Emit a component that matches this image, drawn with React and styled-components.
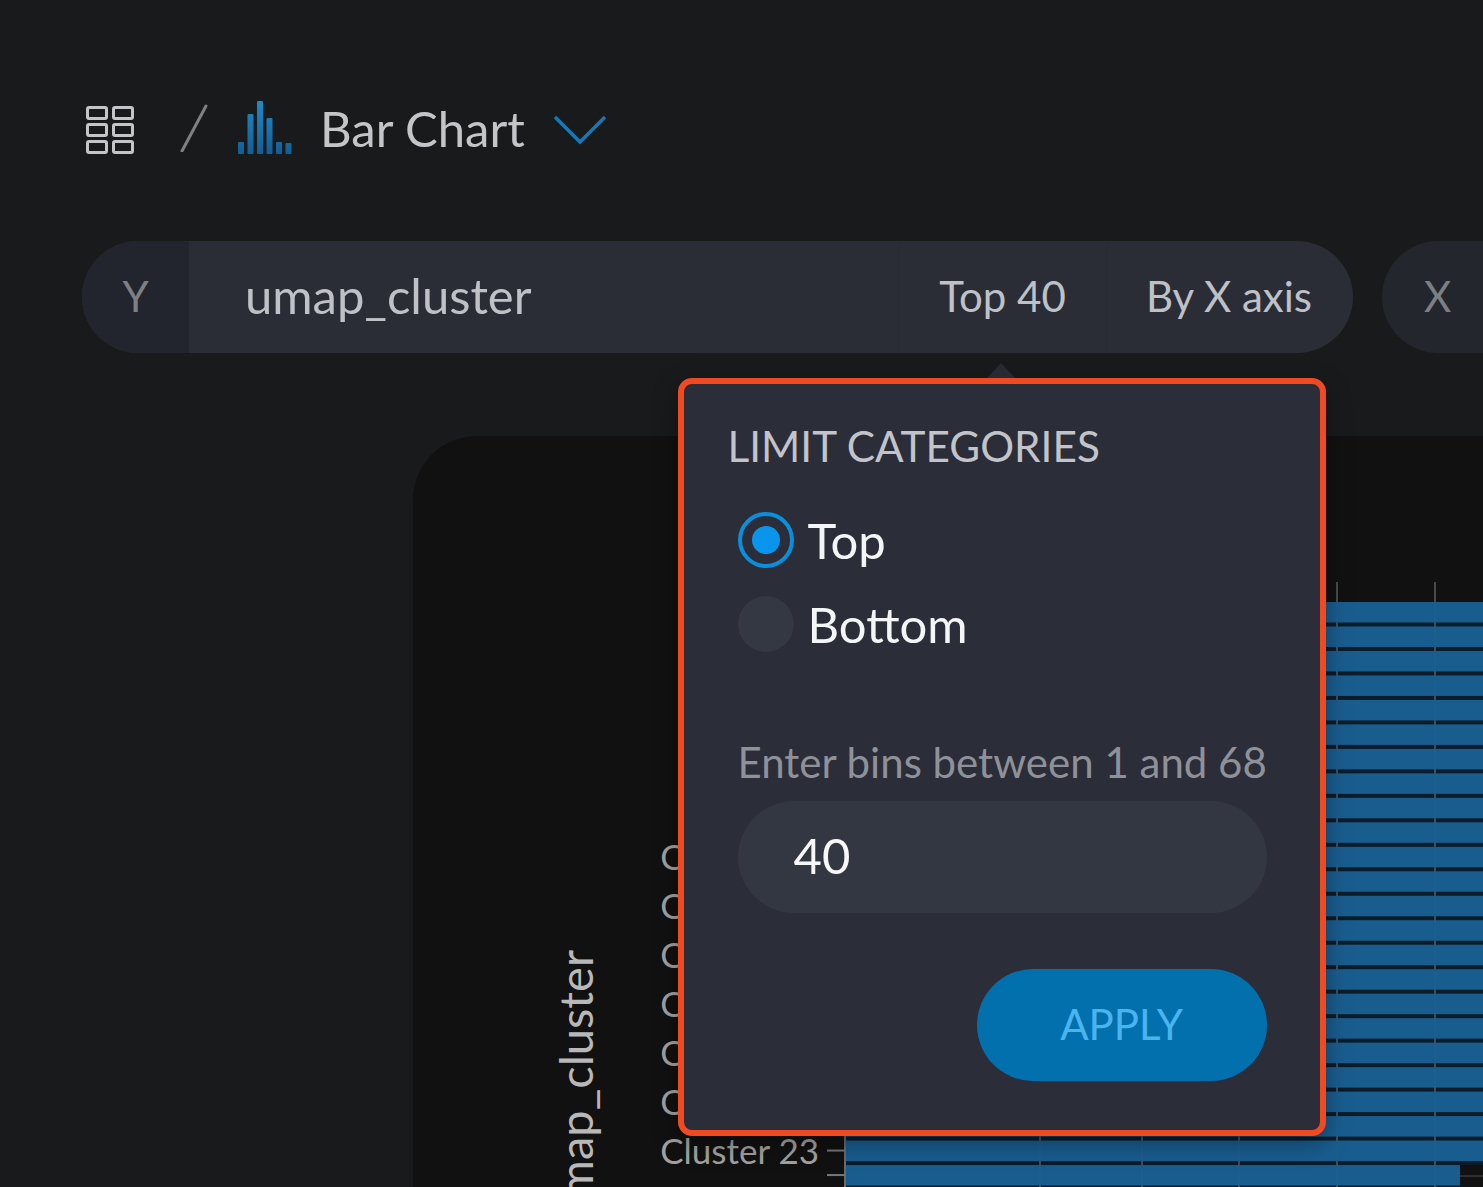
import React from "react";
import styled, { createGlobalStyle } from "styled-components";

const Global = createGlobalStyle`
  html, body { margin: 0; padding: 0; background: #191a1c; }
  body { font-family: Lato, "Open Sans", sans-serif; }
`;

const Page = styled.div`
  width: 1483px;
  height: 1187px;
  overflow: hidden;
  box-sizing: border-box;
  padding: 98px 0 0 82px;
  background: #191a1c;
`;

const Header = styled.header`
  display: flex;
  align-items: center;
  height: 60px;
  padding-left: 4px;
`;

const Title = styled.h1`
  margin: 0 28px 0 28px;
  font-size: 49px;
  line-height: 60px;
  font-weight: 400;
  color: #c4c5c9;
`;

const Slash = styled.svg`
  margin: 0 30px 0 46px;
  flex: none;
`;

const GridSvg = styled.svg`
  flex: none;
  margin-top: 3px;
`;

const BarsSvg = styled.svg`
  flex: none;
  margin-top: -3px;
`;

const ChevronSvg = styled.svg`
  flex: none;
  margin-top: 3px;
`;

const PillRow = styled.div`
  display: flex;
  gap: 29px;
  margin-top: 83px;
  width: 1700px;
`;

const FieldPill = styled.div`
  display: flex;
  width: 1271px;
  height: 112px;
  border-radius: 56px;
  background: #2a2d36;
  color: #bfc1c7;
`;

const AxisCell = styled.div`
  flex: none;
  box-sizing: border-box;
  width: 107px;
  height: 100%;
  padding-bottom: 2px;
  display: flex;
  align-items: center;
  justify-content: center;
  font-size: 42px;
  font-weight: 400;
  color: #7d7f85;
  background: #22252d;
  border-radius: 56px 0 0 56px;
`;

const NameCell = styled.div`
  flex: none;
  box-sizing: border-box;
  width: 710px;
  display: flex;
  align-items: center;
  padding: 0 0 4px 56px;
  font-size: 49px;
  font-weight: 400;
  border-right: 1px solid #282b33;
`;

const OptionCell = styled.div`
  flex: none;
  position: relative;
  box-sizing: border-box;
  width: ${(p) => p.$w}px;
  padding: 0 ${(p) => (p.$last ? 2 : 0)}px 2px 0;
  display: flex;
  align-items: center;
  justify-content: center;
  font-size: 42px;
  font-weight: 400;
  border-right: ${(p) => (p.$last ? "none" : "1px solid #282b33")};
`;

const XPill = styled.div`
  flex: none;
  box-sizing: border-box;
  width: 300px;
  height: 112px;
  padding: 0 0 2px 42px;
  display: flex;
  align-items: center;
  border-radius: 56px 0 0 56px;
  background: #23262d;
  font-size: 42px;
  font-weight: 400;
  color: #7d7f85;
`;

const ChartPanel = styled.section`
  margin: 83px 0 0 331px;
  width: 1070px;
  height: 751px;
  background: #111112;
  border-radius: 64px 0 0 0;
  overflow: hidden;
`;

const ChartSvg = styled.svg`
  display: block;
`;

const Popover = styled.div`
  position: absolute;
  z-index: 2;
  top: calc(100% + 25px);
  left: calc(50% - 325px);
  box-sizing: border-box;
  width: 648px;
  height: 758px;
  padding: 36px 53px 0 44px;
  background: #2b2d38;
  border: 6px solid #f04a23;
  border-radius: 14px;
  box-shadow: 0 8px 24px rgba(0, 0, 0, 0.35);

  &::before {
    content: "";
    position: absolute;
    top: -21px;
    left: 303px;
    border-left: 14px solid transparent;
    border-right: 14px solid transparent;
    border-bottom: 15px solid #272933;
  }
`;

const PopTitle = styled.div`
  font-size: 42.3px;
  line-height: 52px;
  font-weight: 400;
  color: #c2c4ca;
  white-space: nowrap;
`;

const RadioGroup = styled.div`
  display: flex;
  flex-direction: column;
  gap: 28px;
  margin: 40px 0 0 10px;
`;

const RadioRow = styled.label`
  display: flex;
  align-items: center;
  gap: 14px;
  height: 56px;
  font-size: 49px;
  font-weight: 400;
  color: #f4f5f6;
`;

const RadioDot = styled.span`
  flex: none;
  box-sizing: border-box;
  width: 56px;
  height: 56px;
  border-radius: 50%;
  display: flex;
  align-items: center;
  justify-content: center;
  background: ${(p) => (p.$on ? "transparent" : "#343842")};
  border: ${(p) => (p.$on ? "4px solid #0a8fdc" : "none")};

  &::after {
    content: "";
    display: ${(p) => (p.$on ? "block" : "none")};
    width: 28px;
    height: 28px;
    border-radius: 50%;
    background: #0a95ec;
  }
`;

const FieldLabel = styled.div`
  margin: 85px 0 0 10px;
  font-size: 42px;
  line-height: 50px;
  font-weight: 400;
  color: #8f9198;
  white-space: nowrap;
`;

const NumberBox = styled.div`
  box-sizing: border-box;
  margin: 14px 0 0 10px;
  height: 112px;
  padding: 0 0 4px 56px;
  display: flex;
  align-items: center;
  border-radius: 56px;
  background: #333742;
  font-size: 49px;
  color: #f7f7f8;
`;

const Footer = styled.div`
  display: flex;
  justify-content: flex-end;
  margin-top: 56px;
`;

const ApplyButton = styled.button`
  width: 290px;
  height: 112px;
  padding: 0 0 2px;
  border: none;
  border-radius: 56px;
  background: #0370ae;
  color: #4ab4ee;
  font-family: inherit;
  font-size: 42px;
  font-weight: 400;
`;

const AxisLabel = styled.text`
  font-family: Lato, sans-serif;
  font-size: 35px;
  fill: #a2a2a2;
`;

const AxisTitle = styled.text`
  font-family: Lato, sans-serif;
  font-size: 47px;
  font-weight: 400;
  fill: #b8b8b8;
`;

const ROWS = Array.from({ length: 24 }, (_, i) => i);
const TICKS = [1040, 1142, 1239, 1337, 1435];
const rowTop = (i) => 602 + i * 24.48;

function Chart() {
  return (
    <ChartSvg width="1070" height="751" viewBox="413 436 1070 751">
      <rect x="845" y="602" width="638" height="585" fill="#0b1c2a" />
      {TICKS.map((x) => (
        <line key={x} x1={x} y1="582" x2={x} y2="1187" stroke="#4a4a4a" strokeWidth="2" />
      ))}
      <rect x="1460" y={rowTop(23)} width="23" height="24" fill="#111112" />
      <line x1="1460" y1={rowTop(23) + 11} x2="1483" y2={rowTop(23) + 11} stroke="#3a3a3a" strokeWidth="1.5" />
      {ROWS.map((i) => (
        <rect
          key={i}
          x="845"
          y={rowTop(i)}
          width={i === 23 ? 615 : 638}
          height="20.5"
          fill="#1a6093"
          fillOpacity="0.97"
        />
      ))}
      <line x1="845" y1="602" x2="845" y2="1187" stroke="#6a6a6a" strokeWidth="2" />
      {ROWS.map((i) => (
        <line key={i} x1="827" y1={rowTop(i) + 10} x2="845" y2={rowTop(i) + 10} stroke="#777" strokeWidth="2" />
      ))}
      {ROWS.filter((i) => i % 2 === 0 && i >= 10).map((i) => (
        <AxisLabel key={i} x="819" y={rowTop(i) + 23} textAnchor="end">
          {`Cluster ${i + 1}`}
        </AxisLabel>
      ))}
      <AxisTitle transform="translate(593 950) rotate(-90)" textAnchor="end">
        umap_cluster
      </AxisTitle>
    </ChartSvg>
  );
}

function GridIcon() {
  const cells = [];
  [0, 1].forEach((c) =>
    [0, 1, 2].forEach((r) =>
      cells.push(
        <rect key={`${c}${r}`} x={1.5 + c * 26} y={1.5 + r * 17} width="19" height="11" rx="1.5" fill="none" stroke="#c4c5c9" strokeWidth="3" />
      )
    )
  );
  return (
    <GridSvg width="48" height="48" viewBox="0 0 48 48">
      {cells}
    </GridSvg>
  );
}

function BarsIcon() {
  const hs = [12, 40, 53, 36, 12, 11];
  return (
    <BarsSvg width="54" height="54" viewBox="0 0 54 54">
      <defs>
        <linearGradient id="barGrad" gradientUnits="userSpaceOnUse" x1="0" y1="0" x2="0" y2="54">
          <stop offset="0" stopColor="#2189c8" />
          <stop offset="1" stopColor="#125f95" />
        </linearGradient>
      </defs>
      {hs.map((h, i) => (
        <rect key={i} x={i * 9.5} y={54 - h} width="6" height={h} rx="1" fill="url(#barGrad)" />
      ))}
    </BarsSvg>
  );
}

export default function App() {
  return (
    <>
      <Global />
      <Page>
        <Header>
          <GridIcon />
          <Slash width="28" height="48" viewBox="0 0 28 48">
            <line x1="26" y1="2" x2="2" y2="47" stroke="#808080" strokeWidth="3" strokeLinecap="round" />
          </Slash>
          <BarsIcon />
          <Title>Bar Chart</Title>
          <ChevronSvg width="54" height="32" viewBox="0 0 54 32">
            <path d="M2 3 L27 28 L52 3" fill="none" stroke="#1578b8" strokeWidth="3.5" />
          </ChevronSvg>
        </Header>
        <PillRow>
          <FieldPill>
            <AxisCell>Y</AxisCell>
            <NameCell>umap_cluster</NameCell>
            <OptionCell $w={208}>
              Top 40
              <Popover>
                <PopTitle>LIMIT CATEGORIES</PopTitle>
                <RadioGroup>
                  <RadioRow>
                    <RadioDot $on />
                    Top
                  </RadioRow>
                  <RadioRow>
                    <RadioDot />
                    Bottom
                  </RadioRow>
                </RadioGroup>
                <FieldLabel>Enter bins between 1 and 68</FieldLabel>
                <NumberBox>40</NumberBox>
                <Footer>
                  <ApplyButton>APPLY</ApplyButton>
                </Footer>
              </Popover>
            </OptionCell>
            <OptionCell $w={246} $last>
              By X axis
            </OptionCell>
          </FieldPill>
          <XPill>X</XPill>
        </PillRow>
        <ChartPanel>
          <Chart />
        </ChartPanel>
      </Page>
    </>
  );
}
